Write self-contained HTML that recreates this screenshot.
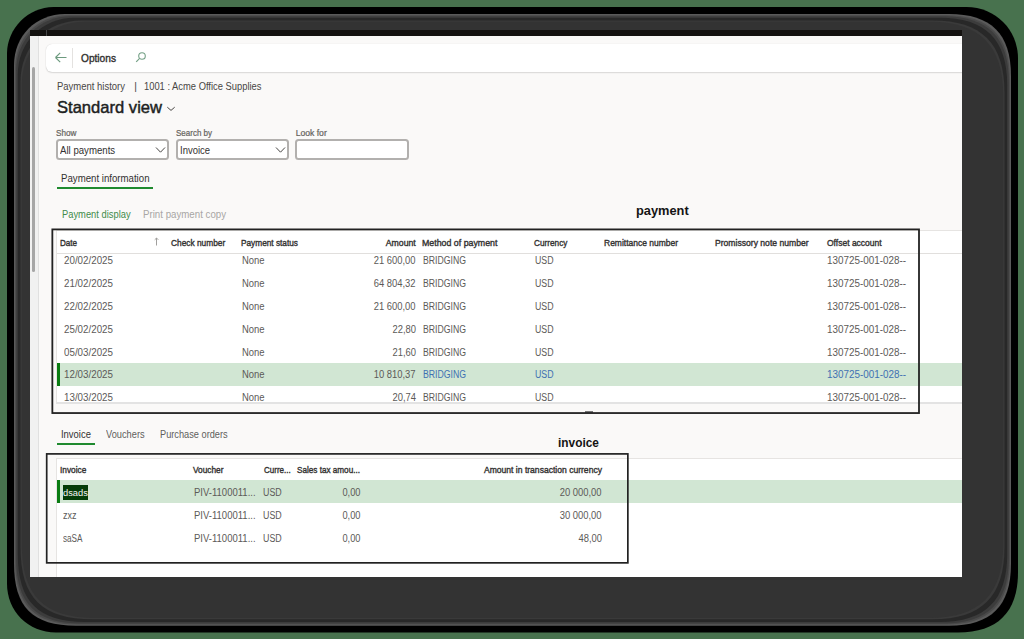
<!DOCTYPE html>
<html><head><meta charset="utf-8">
<style>
*{margin:0;padding:0;box-sizing:border-box}
html,body{width:1024px;height:639px;overflow:hidden;background:#48724e;font-family:"Liberation Sans",sans-serif}
.a{position:absolute}
.t{position:absolute;white-space:nowrap;line-height:1}
#content{left:30px;top:30px;width:932px;height:547px;background:#faf9f8;overflow:hidden}
#pc{position:absolute;left:-30px;top:-30px;width:1024px;height:639px}
.box{position:absolute;border:2px solid #333}
.dd{position:absolute;border:2px solid #b2b0ae;border-radius:3.5px;background:#fff}
</style></head><body>
<svg class="a" style="left:0;top:0" width="1024" height="639" viewBox="0 0 1024 639"><path d="M53.50 7.00H966.50C995.34 7.00 1018.00 29.66 1018.00 58.50V572.60C1018.00 612.20 997.60 632.60 958.00 632.60H56.00C28.07 632.60 7.00 611.53 7.00 583.60V53.50C7.00 28.39 28.39 7.00 53.50 7.00Z" fill="#000"/><path d="M65.00 14.00H949.00C991.16 14.00 1011.00 33.84 1011.00 76.00V563.70C1011.00 605.86 991.16 625.70 949.00 625.70H76.00C32.60 625.70 14.00 607.10 14.00 563.70V65.00C14.00 35.93 35.93 14.00 65.00 14.00Z" fill="#5a5a5a"/><path d="M68.00 15.20H946.00C989.38 15.20 1009.80 35.62 1009.80 79.00V560.70C1009.80 604.08 989.38 624.50 946.00 624.50H79.00C34.34 624.50 15.20 605.36 15.20 560.70V68.00C15.20 37.90 37.90 15.20 68.00 15.20Z" fill="#4a4a4a"/><path d="M70.50 16.20H943.50C987.90 16.20 1008.80 37.10 1008.80 81.50V558.20C1008.80 602.60 987.90 623.50 943.50 623.50H81.50C35.79 623.50 16.20 603.91 16.20 558.20V70.50C16.20 39.55 39.55 16.20 70.50 16.20Z" fill="#3c3c3c"/><path d="M74.50 17.80H939.50C985.54 17.80 1007.20 39.46 1007.20 85.50V554.20C1007.20 600.24 985.54 621.90 939.50 621.90H85.50C38.11 621.90 17.80 601.59 17.80 554.20V74.50C17.80 42.18 42.18 17.80 74.50 17.80Z" fill="#282828"/><path d="M81.25 20.50H932.75C981.54 20.50 1004.50 43.46 1004.50 92.25V547.45C1004.50 596.24 981.54 619.20 932.75 619.20H92.25C42.03 619.20 20.50 597.68 20.50 547.45V81.25C20.50 46.62 46.62 20.50 81.25 20.50Z" fill="#3a3a3a"/><path d="M84.50 21.80H929.50C979.62 21.80 1003.20 45.38 1003.20 95.50V544.20C1003.20 594.32 979.62 617.90 929.50 617.90H95.50C43.91 617.90 21.80 595.79 21.80 544.20V84.50C21.80 48.76 48.76 21.80 84.50 21.80Z" fill="#333333"/></svg>
<div id="content" class="a"><div id="pc">
  <div class="a" style="left:30px;top:30px;width:932px;height:6px;background:#141210"></div>
  <div class="a" style="left:46px;top:30px;width:1px;height:6px;background:#464646"></div>
  <div class="a" style="left:30px;top:36px;width:8px;height:541px;background:#f1f1f1"></div>
  <div class="a" style="left:38px;top:36px;width:1px;height:541px;background:#e0e0e0"></div>
  <div class="a" style="left:31.5px;top:67px;width:3.5px;height:205px;background:#a6a6a6;border-radius:2px"></div>
  <!-- toolbar -->
  <div class="a" style="left:46px;top:44px;width:960px;height:27.5px;background:#fff;border-radius:6px;box-shadow:0 0 1px rgba(0,0,0,.18), 0 1px 1.5px rgba(0,0,0,.12)"></div>
  <svg class="a" style="left:54px;top:51px" width="14" height="13" viewBox="0 0 14 13"><path d="M1.5 6.5H12.5M1.5 6.5L6.2 1.8M1.5 6.5L6.2 11.2" stroke="#6c9a7e" stroke-width="1.15" fill="none"/></svg>
  <div class="a" style="left:72px;top:47.5px;width:1px;height:20px;background:#e4e2e0"></div>
  <svg class="a" style="left:134px;top:51px" width="13" height="13" viewBox="0 0 13 13"><circle cx="8" cy="5" r="3.3" stroke="#74a086" stroke-width="1.1" fill="none"/><path d="M5.6 7.4L2.2 10.8" stroke="#74a086" stroke-width="1.2"/></svg>
  <!-- title chevron -->
  <svg class="a" style="left:166px;top:105px" width="10" height="7" viewBox="0 0 10 7"><path d="M1.3 2.2L5 5.4L8.7 2.2" stroke="#484644" stroke-width="1" fill="none"/></svg>
  <!-- dropdowns -->
  <div class="dd" style="left:56px;top:139px;width:113px;height:21px"></div>
  <div class="dd" style="left:176px;top:139px;width:113px;height:21px"></div>
  <div class="dd" style="left:295px;top:139px;width:114px;height:21px"></div>
  <svg class="a" style="left:155px;top:146px" width="11" height="8" viewBox="0 0 11 8"><path d="M1 1.5L5.5 6.2L10 1.5" stroke="#484644" stroke-width="1" fill="none"/></svg>
  <svg class="a" style="left:275px;top:146px" width="11" height="8" viewBox="0 0 11 8"><path d="M1 1.5L5.5 6.2L10 1.5" stroke="#484644" stroke-width="1" fill="none"/></svg>
  <!-- tab underline -->
  <div class="a" style="left:56.5px;top:187px;width:96.5px;height:2px;background:#1f8a2f"></div>
  <!-- payment grid -->
  <div class="a" style="left:56px;top:230px;width:906px;height:173px;background:#fff;border-left:1px solid #e6e4e2;border-top:1.5px solid #e6e4e2"></div>
  <div class="a" style="left:57px;top:252.6px;width:905px;height:1.6px;background:#e1dfdd"></div>
  <div class="a" style="left:57px;top:363.2px;width:905px;height:22.5px;background:#d1e6d3"></div>
  <div class="a" style="left:57px;top:363px;width:3px;height:23px;background:#0a7c12"></div>
  <div class="a" style="left:56px;top:402px;width:906px;height:1.8px;background:#e3e3e3"></div>
  <svg class="a" style="left:154px;top:237px" width="5" height="9" viewBox="0 0 5 9"><path d="M2.5 8.5V1M0.7 2.8L2.5 1L4.3 2.8" stroke="#a19f9d" stroke-width="1" fill="none"/></svg>
  <div class="a" style="left:584.5px;top:410.5px;width:8px;height:2px;background:#777"></div>
  <svg class="a" style="left:0;top:0" width="1024" height="639"><rect x="52.35" y="229.4" width="866.65" height="183.65" fill="none" stroke="#222" stroke-width="1.8"/></svg>
  <!-- invoice tabs -->
  <div class="a" style="left:56.5px;top:443.3px;width:38px;height:2px;background:#1f8a2f"></div>
  <!-- invoice grid -->
  <div class="a" style="left:56px;top:457.5px;width:906px;height:130px;background:#fff;border-left:1px solid #e6e4e2;border-top:1.5px solid #e6e4e2"></div>
  <div class="a" style="left:57px;top:480.3px;width:905px;height:22.8px;background:#d1e6d3"></div>
  <div class="a" style="left:57px;top:480px;width:3px;height:23px;background:#0a7c12"></div>
  <div class="a" style="left:63px;top:484.5px;width:25.2px;height:15px;background:#053c08"></div>
  <svg class="a" style="left:0;top:0" width="1024" height="639"><rect x="46.7" y="453.9" width="581.15" height="108.95" fill="none" stroke="#222" stroke-width="1.7"/></svg>
  <div class="t" style="top:53.36px;font-size:10.8px;color:#323130;-webkit-text-stroke:0.38px #323130;left:81.00px;transform:scaleX(0.940);transform-origin:left;">Options</div>
<div class="t" style="top:81.70px;font-size:10.4px;color:#484644;left:57.00px;transform:scaleX(0.913);transform-origin:left;">Payment history</div>
<div class="t" style="top:81.70px;font-size:10.4px;color:#484644;left:134.20px;">|</div>
<div class="t" style="top:81.70px;font-size:10.4px;color:#484644;left:144.00px;transform:scaleX(0.901);transform-origin:left;">1001 : Acme Office Supplies</div>
<div class="t" style="top:99.22px;font-size:16.4px;color:#201f1e;-webkit-text-stroke:0.45px #201f1e;left:57.30px;transform:scaleX(1.011);transform-origin:left;">Standard view</div>
<div class="t" style="top:129.12px;font-size:8.6px;color:#66645f;-webkit-text-stroke:0.22px #66645f;left:56.40px;transform:scaleX(0.949);transform-origin:left;">Show</div>
<div class="t" style="top:129.12px;font-size:8.6px;color:#66645f;-webkit-text-stroke:0.22px #66645f;left:176.10px;transform:scaleX(0.930);transform-origin:left;">Search by</div>
<div class="t" style="top:129.12px;font-size:8.6px;color:#66645f;-webkit-text-stroke:0.22px #66645f;left:295.70px;">Look for</div>
<div class="t" style="top:145.94px;font-size:10px;color:#323130;left:60.00px;transform:scaleX(0.964);transform-origin:left;">All payments</div>
<div class="t" style="top:145.84px;font-size:10px;color:#323130;left:180.30px;transform:scaleX(0.947);transform-origin:left;">Invoice</div>
<div class="t" style="top:173.84px;font-size:10px;color:#323130;left:61.00px;transform:scaleX(0.965);transform-origin:left;">Payment information</div>
<div class="t" style="top:209.63px;font-size:10px;color:#3f8b4a;left:61.70px;transform:scaleX(0.935);transform-origin:left;">Payment display</div>
<div class="t" style="top:209.63px;font-size:10px;color:#a8a6a4;left:142.60px;transform:scaleX(0.970);transform-origin:left;">Print payment copy</div>
<div class="t" style="top:203.66px;font-size:13.4px;color:#141414;font-weight:700;left:636.00px;transform:scaleX(0.957);transform-origin:left;">payment</div>
<div class="t" style="top:435.86px;font-size:13.4px;color:#141414;font-weight:700;left:558.20px;transform:scaleX(0.888);transform-origin:left;">invoice</div>
<div class="t" style="top:238.26px;font-size:9.5px;color:#323130;-webkit-text-stroke:0.38px #323130;left:60.20px;transform:scaleX(0.852);transform-origin:left;">Date</div>
<div class="t" style="top:238.26px;font-size:9.5px;color:#323130;-webkit-text-stroke:0.38px #323130;left:171.00px;transform:scaleX(0.877);transform-origin:left;">Check number</div>
<div class="t" style="top:238.26px;font-size:9.5px;color:#323130;-webkit-text-stroke:0.38px #323130;left:241.20px;transform:scaleX(0.870);transform-origin:left;">Payment status</div>
<div class="t" style="top:238.26px;font-size:9.5px;color:#323130;-webkit-text-stroke:0.38px #323130;left:383.05px;transform:scaleX(0.916);transform-origin:right;">Amount</div>
<div class="t" style="top:238.26px;font-size:9.5px;color:#323130;-webkit-text-stroke:0.38px #323130;left:422.00px;transform:scaleX(0.928);transform-origin:left;">Method of payment</div>
<div class="t" style="top:238.26px;font-size:9.5px;color:#323130;-webkit-text-stroke:0.38px #323130;left:533.60px;transform:scaleX(0.866);transform-origin:left;">Currency</div>
<div class="t" style="top:238.26px;font-size:9.5px;color:#323130;-webkit-text-stroke:0.38px #323130;left:603.60px;transform:scaleX(0.893);transform-origin:left;">Remittance number</div>
<div class="t" style="top:238.26px;font-size:9.5px;color:#323130;-webkit-text-stroke:0.38px #323130;left:714.60px;transform:scaleX(0.904);transform-origin:left;">Promissory note number</div>
<div class="t" style="top:238.26px;font-size:9.5px;color:#323130;-webkit-text-stroke:0.38px #323130;left:826.70px;transform:scaleX(0.895);transform-origin:left;">Offset account</div>
<div class="t" style="top:256.44px;font-size:10px;color:#5c5a58;left:63.80px;transform:scaleX(0.979);transform-origin:left;">20/02/2025</div>
<div class="t" style="top:256.44px;font-size:10px;color:#5c5a58;left:242.30px;transform:scaleX(0.945);transform-origin:left;">None</div>
<div class="t" style="top:256.44px;font-size:10px;color:#5c5a58;left:371.10px;transform:scaleX(0.940);transform-origin:right;">21 600,00</div>
<div class="t" style="top:256.44px;font-size:10px;color:#5c5a58;left:423.00px;transform:scaleX(0.870);transform-origin:left;">BRIDGING</div>
<div class="t" style="top:256.44px;font-size:10px;color:#5c5a58;left:534.70px;transform:scaleX(0.880);transform-origin:left;">USD</div>
<div class="t" style="top:256.44px;font-size:10px;color:#5c5a58;left:826.70px;transform:scaleX(0.987);transform-origin:left;">130725-001-028--</div>
<div class="t" style="top:279.24px;font-size:10px;color:#5c5a58;left:63.80px;transform:scaleX(0.979);transform-origin:left;">21/02/2025</div>
<div class="t" style="top:279.24px;font-size:10px;color:#5c5a58;left:242.30px;transform:scaleX(0.945);transform-origin:left;">None</div>
<div class="t" style="top:279.24px;font-size:10px;color:#5c5a58;left:371.10px;transform:scaleX(0.940);transform-origin:right;">64 804,32</div>
<div class="t" style="top:279.24px;font-size:10px;color:#5c5a58;left:423.00px;transform:scaleX(0.870);transform-origin:left;">BRIDGING</div>
<div class="t" style="top:279.24px;font-size:10px;color:#5c5a58;left:534.70px;transform:scaleX(0.880);transform-origin:left;">USD</div>
<div class="t" style="top:279.24px;font-size:10px;color:#5c5a58;left:826.70px;transform:scaleX(0.987);transform-origin:left;">130725-001-028--</div>
<div class="t" style="top:302.04px;font-size:10px;color:#5c5a58;left:63.80px;transform:scaleX(0.979);transform-origin:left;">22/02/2025</div>
<div class="t" style="top:302.04px;font-size:10px;color:#5c5a58;left:242.30px;transform:scaleX(0.945);transform-origin:left;">None</div>
<div class="t" style="top:302.04px;font-size:10px;color:#5c5a58;left:371.10px;transform:scaleX(0.940);transform-origin:right;">21 600,00</div>
<div class="t" style="top:302.04px;font-size:10px;color:#5c5a58;left:423.00px;transform:scaleX(0.870);transform-origin:left;">BRIDGING</div>
<div class="t" style="top:302.04px;font-size:10px;color:#5c5a58;left:534.70px;transform:scaleX(0.880);transform-origin:left;">USD</div>
<div class="t" style="top:302.04px;font-size:10px;color:#5c5a58;left:826.70px;transform:scaleX(0.987);transform-origin:left;">130725-001-028--</div>
<div class="t" style="top:324.83px;font-size:10px;color:#5c5a58;left:63.80px;transform:scaleX(0.979);transform-origin:left;">25/02/2025</div>
<div class="t" style="top:324.83px;font-size:10px;color:#5c5a58;left:242.30px;transform:scaleX(0.945);transform-origin:left;">None</div>
<div class="t" style="top:324.83px;font-size:10px;color:#5c5a58;left:390.57px;transform:scaleX(0.940);transform-origin:right;">22,80</div>
<div class="t" style="top:324.83px;font-size:10px;color:#5c5a58;left:423.00px;transform:scaleX(0.870);transform-origin:left;">BRIDGING</div>
<div class="t" style="top:324.83px;font-size:10px;color:#5c5a58;left:534.70px;transform:scaleX(0.880);transform-origin:left;">USD</div>
<div class="t" style="top:324.83px;font-size:10px;color:#5c5a58;left:826.70px;transform:scaleX(0.987);transform-origin:left;">130725-001-028--</div>
<div class="t" style="top:347.63px;font-size:10px;color:#5c5a58;left:63.80px;transform:scaleX(0.979);transform-origin:left;">05/03/2025</div>
<div class="t" style="top:347.63px;font-size:10px;color:#5c5a58;left:242.30px;transform:scaleX(0.945);transform-origin:left;">None</div>
<div class="t" style="top:347.63px;font-size:10px;color:#5c5a58;left:390.57px;transform:scaleX(0.940);transform-origin:right;">21,60</div>
<div class="t" style="top:347.63px;font-size:10px;color:#5c5a58;left:423.00px;transform:scaleX(0.870);transform-origin:left;">BRIDGING</div>
<div class="t" style="top:347.63px;font-size:10px;color:#5c5a58;left:534.70px;transform:scaleX(0.880);transform-origin:left;">USD</div>
<div class="t" style="top:347.63px;font-size:10px;color:#5c5a58;left:826.70px;transform:scaleX(0.987);transform-origin:left;">130725-001-028--</div>
<div class="t" style="top:370.44px;font-size:10px;color:#5c5a58;left:63.80px;transform:scaleX(0.979);transform-origin:left;">12/03/2025</div>
<div class="t" style="top:370.44px;font-size:10px;color:#5c5a58;left:242.30px;transform:scaleX(0.945);transform-origin:left;">None</div>
<div class="t" style="top:370.44px;font-size:10px;color:#5c5a58;left:371.10px;transform:scaleX(0.940);transform-origin:right;">10 810,37</div>
<div class="t" style="top:370.44px;font-size:10px;color:#3f70b2;left:423.00px;transform:scaleX(0.870);transform-origin:left;">BRIDGING</div>
<div class="t" style="top:370.44px;font-size:10px;color:#3f70b2;left:534.70px;transform:scaleX(0.880);transform-origin:left;">USD</div>
<div class="t" style="top:370.44px;font-size:10px;color:#3f70b2;left:826.70px;transform:scaleX(0.987);transform-origin:left;">130725-001-028--</div>
<div class="t" style="top:393.24px;font-size:10px;color:#5c5a58;left:63.80px;transform:scaleX(0.979);transform-origin:left;">13/03/2025</div>
<div class="t" style="top:393.24px;font-size:10px;color:#5c5a58;left:242.30px;transform:scaleX(0.945);transform-origin:left;">None</div>
<div class="t" style="top:393.24px;font-size:10px;color:#5c5a58;left:390.57px;transform:scaleX(0.940);transform-origin:right;">20,74</div>
<div class="t" style="top:393.24px;font-size:10px;color:#5c5a58;left:423.00px;transform:scaleX(0.870);transform-origin:left;">BRIDGING</div>
<div class="t" style="top:393.24px;font-size:10px;color:#5c5a58;left:534.70px;transform:scaleX(0.880);transform-origin:left;">USD</div>
<div class="t" style="top:393.24px;font-size:10px;color:#5c5a58;left:826.70px;transform:scaleX(0.987);transform-origin:left;">130725-001-028--</div>
<div class="t" style="top:429.98px;font-size:10.3px;color:#323130;left:60.60px;transform:scaleX(0.916);transform-origin:left;">Invoice</div>
<div class="t" style="top:429.98px;font-size:10.3px;color:#605e5c;left:106.00px;transform:scaleX(0.899);transform-origin:left;">Vouchers</div>
<div class="t" style="top:429.98px;font-size:10.3px;color:#605e5c;left:160.40px;transform:scaleX(0.896);transform-origin:left;">Purchase orders</div>
<div class="t" style="top:465.26px;font-size:9.5px;color:#323130;-webkit-text-stroke:0.38px #323130;left:60.00px;transform:scaleX(0.873);transform-origin:left;">Invoice</div>
<div class="t" style="top:465.26px;font-size:9.5px;color:#323130;-webkit-text-stroke:0.38px #323130;left:193.20px;transform:scaleX(0.875);transform-origin:left;">Voucher</div>
<div class="t" style="top:465.26px;font-size:9.5px;color:#323130;-webkit-text-stroke:0.38px #323130;left:263.60px;transform:scaleX(0.843);transform-origin:left;">Curre...</div>
<div class="t" style="top:465.26px;font-size:9.5px;color:#323130;-webkit-text-stroke:0.38px #323130;left:297.20px;transform:scaleX(0.858);transform-origin:left;">Sales tax amou...</div>
<div class="t" style="top:465.26px;font-size:9.5px;color:#323130;-webkit-text-stroke:0.38px #323130;left:470.75px;transform:scaleX(0.901);transform-origin:right;">Amount in transaction currency</div>
<div class="t" style="top:488.97px;font-size:8.9px;color:#f4f4f4;left:63.30px;transform:scaleX(1.047);transform-origin:left;">dsads</div>
<div class="t" style="top:488.04px;font-size:10px;color:#5c5a58;left:193.80px;transform:scaleX(0.952);transform-origin:left;">PIV-1100011...</div>
<div class="t" style="top:488.04px;font-size:10px;color:#5c5a58;left:263.30px;transform:scaleX(0.885);transform-origin:left;">USD</div>
<div class="t" style="top:488.04px;font-size:10px;color:#5c5a58;left:340.53px;transform:scaleX(0.925);transform-origin:right;">0,00</div>
<div class="t" style="top:488.04px;font-size:10px;color:#5c5a58;left:557.10px;transform:scaleX(0.940);transform-origin:right;">20 000,00</div>
<div class="t" style="top:510.94px;font-size:10px;color:#5c5a58;left:63.30px;transform:scaleX(0.900);transform-origin:left;">zxz</div>
<div class="t" style="top:510.94px;font-size:10px;color:#5c5a58;left:193.80px;transform:scaleX(0.952);transform-origin:left;">PIV-1100011...</div>
<div class="t" style="top:510.94px;font-size:10px;color:#5c5a58;left:263.30px;transform:scaleX(0.885);transform-origin:left;">USD</div>
<div class="t" style="top:510.94px;font-size:10px;color:#5c5a58;left:340.53px;transform:scaleX(0.925);transform-origin:right;">0,00</div>
<div class="t" style="top:510.94px;font-size:10px;color:#5c5a58;left:557.10px;transform:scaleX(0.940);transform-origin:right;">30 000,00</div>
<div class="t" style="top:533.53px;font-size:10px;color:#5c5a58;left:63.30px;transform:scaleX(0.816);transform-origin:left;">saSA</div>
<div class="t" style="top:533.53px;font-size:10px;color:#5c5a58;left:193.80px;transform:scaleX(0.952);transform-origin:left;">PIV-1100011...</div>
<div class="t" style="top:533.53px;font-size:10px;color:#5c5a58;left:263.30px;transform:scaleX(0.885);transform-origin:left;">USD</div>
<div class="t" style="top:533.53px;font-size:10px;color:#5c5a58;left:340.53px;transform:scaleX(0.925);transform-origin:right;">0,00</div>
<div class="t" style="top:533.53px;font-size:10px;color:#5c5a58;left:576.57px;transform:scaleX(0.940);transform-origin:right;">48,00</div>
</div></div>
</body></html>
